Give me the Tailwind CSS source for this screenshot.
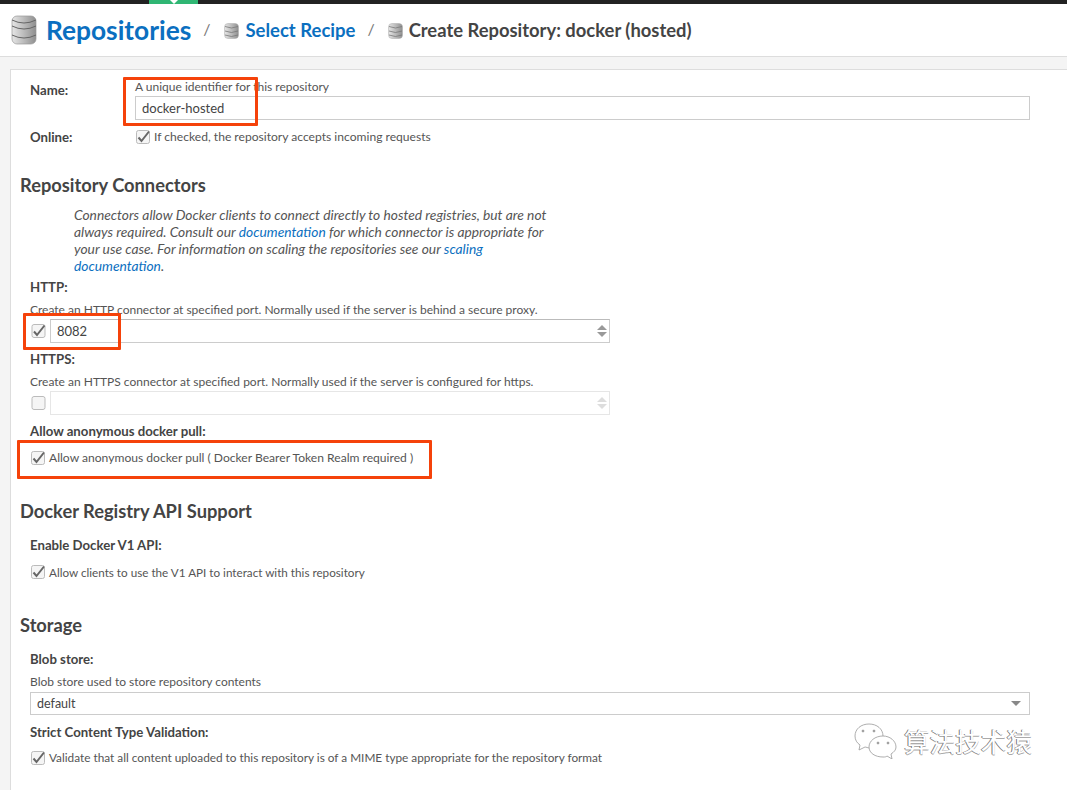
<!DOCTYPE html>
<html lang="en">
<head>
    <meta charset="UTF-8">
    <title>Create Repository: docker (hosted)</title>
    <script src="https://cdn.jsdelivr.net/npm/@tailwindcss/browser@4"></script>
</head>
<body class="bg-white text-[#444] font-['Lato','Liberation_Sans',sans-serif] antialiased">
<div class="relative w-[1067px] h-[790px] overflow-hidden">
    <!-- top bar -->
    <div class="h-[4px] bg-[#222] flex">
        <div class="ml-[149px] w-[49px] h-[4px] bg-[#2fb673] flex justify-center">
            <div class="w-0 h-0 border-x-[4px] border-x-transparent border-t-[4px] border-t-white"></div>
        </div>
    </div>

    <!-- breadcrumb -->
    <header class="h-[53px] flex items-center pl-[11px] border-b border-[#ddd]">
        <svg class="w-[27px] h-[30px] mt-[-1px]" viewBox="0 0 27 30">
            <defs><linearGradient id="db" x1="0" x2="1" y1="0" y2="0"><stop offset="0" stop-color="#e6e6e6"/><stop offset="1" stop-color="#8f8f8f"/></linearGradient></defs>
            <rect x="1" y="1" width="24" height="28" rx="5" fill="url(#db)" stroke="#999" stroke-width="0.7"/>
            <path d="M1 5q12 6 24 0M1 11q12 6 24 0M1 20q12 6 24 0" fill="none" stroke="#666" stroke-width="1"/>
        </svg>
        <span class="ml-[8px] text-[26.3px] font-bold text-[#0b6fc0] leading-none">Repositories</span>
        <span class="ml-[12px] text-[#777] text-[16px] mb-[3px]">/</span>
        <svg class="ml-[14px] mt-[1px] w-[15px] h-[16px]" viewBox="0 0 15 16">
            <rect x="0.5" y="0.5" width="14" height="15" rx="3.5" fill="url(#db)" stroke="#aaa" stroke-width="0.5"/>
            <path d="M1 3.5q6.5 3 13 0M1 8q6.5 3 13 0M1 12q6.5 3 13 0" fill="none" stroke="#777" stroke-width="0.8"/>
        </svg>
        <span class="ml-[6px] mt-[1px] text-[18.5px] font-bold text-[#0b6fc0] leading-none">Select Recipe</span>
        <span class="ml-[12px] text-[#777] text-[16px] mb-[3px]">/</span>
        <svg class="ml-[13px] mt-[1px] w-[15px] h-[16px]" viewBox="0 0 15 16">
            <rect x="0.5" y="0.5" width="14" height="15" rx="3.5" fill="url(#db)" stroke="#aaa" stroke-width="0.5"/>
            <path d="M1 3.5q6.5 3 13 0M1 8q6.5 3 13 0M1 12q6.5 3 13 0" fill="none" stroke="#777" stroke-width="0.8"/>
        </svg>
        <span class="ml-[6px] mt-[1px] text-[18.4px] font-bold text-[#444] leading-none">Create Repository: docker (hosted)</span>
    </header>

    <!-- page body -->
    <div class="bg-[#f4f4f4] pt-[12px] pl-[10px] h-[733px]">
        <main class="bg-white border-t border-l border-[#ddd] h-full pl-[9px] text-[12px] leading-[16px]">
            <!-- name -->
            <div class="flex pl-[10px] pt-[9px] h-[50px]">
                <div class="w-[105px] pt-[3px] font-bold text-[13.2px]">Name:</div>
                <div class="flex-1">
                    <div class="text-[#555]">A unique identifier for this repository</div>
                    <div class="w-[895px] h-[24px] border border-[#ccc] mt-[1px] pl-[6px] text-[13px] leading-[22px]">docker-hosted</div>
                </div>
            </div>
            <div class="flex items-center pl-[10px] h-[33px]">
                <div class="w-[106px] font-bold text-[13.2px]">Online:</div>
                <svg class="w-[14px] h-[14px]" viewBox="0 0 14 14"><rect x="0.5" y="0.5" width="13" height="13" rx="2" fill="#f5f5f5" stroke="#bbb"/><path d="M2.5 7.5l3 3.5L13 1.5" fill="none" stroke="#666" stroke-width="2"/></svg>
                <span class="ml-[4px] text-[12.1px] text-[#555]">If checked, the repository accepts incoming requests</span>
            </div>

            <h2 class="mt-[20px] text-[18.3px] font-bold leading-[24px]">Repository Connectors</h2>

            <p class="ml-[54px] mt-[9px] w-[478px] italic text-[13.8px] leading-[17px] text-[#555]">Connectors allow Docker clients to connect directly to hosted registries, but are not always required. Consult our <span class="text-[#0b6fc0]">documentation</span> for which connector is appropriate for your use case. For information on scaling the repositories see our <span class="text-[#0b6fc0]">scaling documentation</span>.</p>

            <div class="pl-[10px] mt-[1px] w-[590px]">
                <div class="mt-[5px] font-bold text-[13.2px]">HTTP:</div>
                <div class="mt-[7px] text-[#555]">Create an HTTP connector at specified port. Normally used if the server is behind a secure proxy.</div>
                <div class="flex items-center mt-[1px] h-[24px]">
                    <svg class="w-[15px] h-[14px] shrink-0 ml-[1px]" viewBox="0 0 14 14"><rect x="0.5" y="0.5" width="13" height="13" rx="2" fill="#f5f5f5" stroke="#bbb"/><path d="M2.5 7.5l3 3.5L13 1.5" fill="none" stroke="#666" stroke-width="2"/></svg>
                    <div class="ml-[4px] flex-1 h-[24px] border border-[#ccc] border-t-[#bbb] pl-[6px] pr-[2px] text-[13px] leading-[22px] flex items-center justify-between">
                        <span>8082</span>
                        <span class="flex flex-col gap-[2px]">
                            <span class="w-0 h-0 border-x-[5px] border-x-transparent border-b-[5px] border-b-[#999]"></span>
                            <span class="w-0 h-0 border-x-[5px] border-x-transparent border-t-[5px] border-t-[#999]"></span>
                        </span>
                    </div>
                </div>
                <div class="mt-[8px] font-bold text-[13.2px]">HTTPS:</div>
                <div class="mt-[7px] text-[#555]">Create an HTTPS connector at specified port. Normally used if the server is configured for https.</div>
                <div class="flex items-center mt-[1px] h-[24px]">
                    <svg class="w-[15px] h-[14px] shrink-0 ml-[1px]" viewBox="0 0 14 14"><rect x="0.5" y="0.5" width="13" height="13" rx="2" fill="#f5f5f5" stroke="#bbb"/></svg>
                    <div class="ml-[4px] flex-1 h-[24px] border border-[#e6e6e6] pr-[2px] flex items-center justify-end">
                        <span class="flex flex-col gap-[2px]">
                            <span class="w-0 h-0 border-x-[5px] border-x-transparent border-b-[5px] border-b-[#ddd]"></span>
                            <span class="w-0 h-0 border-x-[5px] border-x-transparent border-t-[5px] border-t-[#ddd]"></span>
                        </span>
                    </div>
                </div>
                <div class="mt-[8px] font-bold text-[13.2px]">Allow anonymous docker pull:</div>
                <div class="flex items-center mt-[11px] ml-[1px]">
                    <svg class="w-[14px] h-[14px] shrink-0" viewBox="0 0 14 14"><rect x="0.5" y="0.5" width="13" height="13" rx="2" fill="#f5f5f5" stroke="#bbb"/><path d="M2.5 7.5l3 3.5L13 1.5" fill="none" stroke="#666" stroke-width="2"/></svg>
                    <span class="ml-[4px] text-[12.1px] text-[#555] whitespace-nowrap">Allow anonymous docker pull ( Docker Bearer Token Realm required )</span>
                </div>
            </div>

            <h2 class="mt-[33px] text-[18.3px] font-bold leading-[24px]">Docker Registry API Support</h2>
            <div class="pl-[10px]">
                <div class="mt-[14px] font-bold text-[13.2px]">Enable Docker V1 API:</div>
                <div class="flex items-center mt-[11px] ml-[1px]">
                    <svg class="w-[14px] h-[14px] shrink-0" viewBox="0 0 14 14"><rect x="0.5" y="0.5" width="13" height="13" rx="2" fill="#f5f5f5" stroke="#bbb"/><path d="M2.5 7.5l3 3.5L13 1.5" fill="none" stroke="#666" stroke-width="2"/></svg>
                    <span class="ml-[4px] text-[11.7px] text-[#555]">Allow clients to use the V1 API to interact with this repository</span>
                </div>
            </div>

            <h2 class="mt-[33px] text-[18.3px] font-bold leading-[24px]">Storage</h2>
            <div class="pl-[10px]">
                <div class="mt-[14px] font-bold text-[13.2px]">Blob store:</div>
                <div class="mt-[7px] text-[#555]">Blob store used to store repository contents</div>
                <div class="mt-[2px] w-[1000px] h-[23px] border border-[#ccc] pl-[6px] pr-[8px] flex items-center justify-between text-[12.5px]">
                    <span>default</span>
                    <span class="w-0 h-0 border-x-[5px] border-x-transparent border-t-[5px] border-t-[#888]"></span>
                </div>
                <div class="mt-[9px] font-bold text-[13.2px]">Strict Content Type Validation:</div>
                <div class="flex items-center mt-[10px] ml-[1px]">
                    <svg class="w-[14px] h-[14px] shrink-0" viewBox="0 0 14 14"><rect x="0.5" y="0.5" width="13" height="13" rx="2" fill="#f5f5f5" stroke="#bbb"/><path d="M2.5 7.5l3 3.5L13 1.5" fill="none" stroke="#666" stroke-width="2"/></svg>
                    <span class="ml-[4px] text-[11.8px] text-[#555]">Validate that all content uploaded to this repository is of a MIME type appropriate for the repository format</span>
                </div>
            </div>
        </main>
    </div>

    <!-- red annotation boxes -->
    <div class="absolute left-[123px] top-[77px] w-[135px] h-[49px] border-[3px] border-[#f5420a] rounded-[1px]"></div>
    <div class="absolute left-[23px] top-[313px] w-[98px] h-[37px] border-[3px] border-[#f5420a] rounded-[1px]"></div>
    <div class="absolute left-[17px] top-[440px] w-[415px] h-[39px] border-[3px] border-[#f5420a] rounded-[1px]"></div>

    <!-- watermark -->
    <div class="absolute left-[854px] top-[723px] flex items-center">
        <svg class="w-[44px] h-[36px]" viewBox="0 0 44 36" fill="#fff" stroke="#999" stroke-width="0.8">
            <path d="M15 1C7 1 1 6 1 13c0 4 2 7 5 9l-1 5 6-3c1 0 3 1 5 1 6 0 13-5 13-12S23 1 15 1z"/>
            <path d="M29 13c-8 0-14 5-14 11s6 10 14 10c2 0 3 0 4-1l5 3-1-5c3-2 5-4 5-7 0-6-6-11-13-11z"/>
            <circle cx="9" cy="8" r="1" fill="#999"/><circle cx="20" cy="8" r="1" fill="#999"/>
            <circle cx="24" cy="20" r="1" fill="#999"/><circle cx="34" cy="20" r="1" fill="#999"/>
        </svg>
        <span class="ml-[6px] text-[25.6px] leading-none text-white font-['Noto_Sans_CJK_SC',sans-serif] [text-shadow:-1px_0_0_#777,0_1px_0_#aaa]">算法技术猿</span>
    </div>
</div>
</body>
</html>
